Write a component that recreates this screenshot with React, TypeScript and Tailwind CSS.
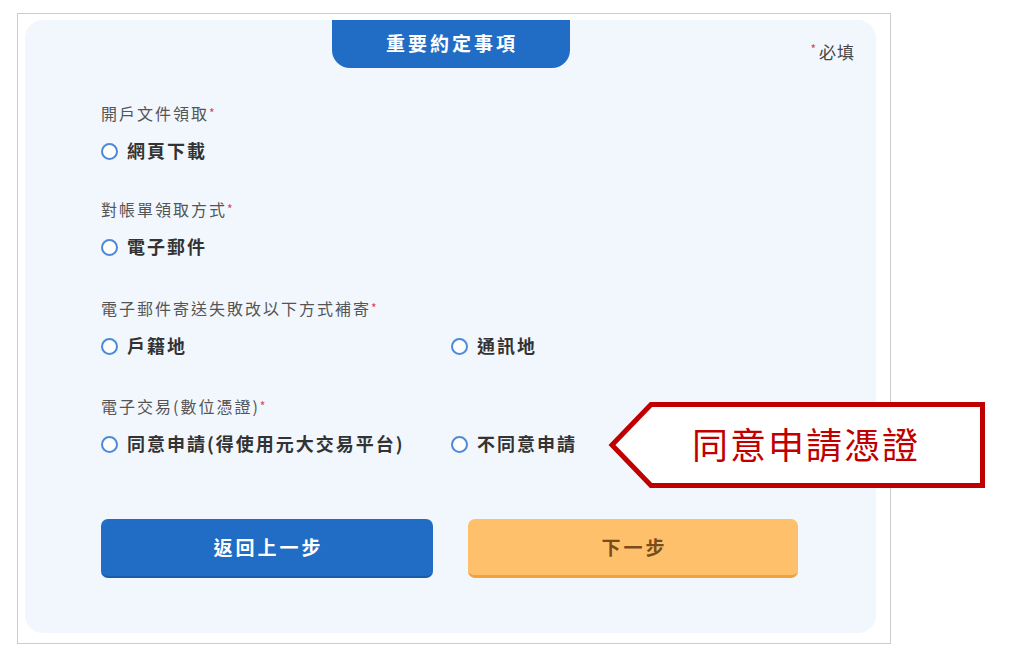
import React from 'react';

type Section = {
  label: string;
  options: string[];
  gap: string;
};

const sections: Section[] = [
  { label: '開戶文件領取', options: ['網頁下載'], gap: 'mt-0' },
  { label: '對帳單領取方式', options: ['電子郵件'], gap: 'mt-[38px]' },
  { label: '電子郵件寄送失敗改以下方式補寄', options: ['戶籍地', '通訊地'], gap: 'mt-[41px]' },
  { label: '電子交易(數位憑證)', options: ['同意申請(得使用元大交易平台)', '不同意申請'], gap: 'mt-[40px]' },
];

function Radio({ text }: { text: string }) {
  return (
    <label className="w-[350px] h-[20px] flex items-center gap-[9px] cursor-pointer">
      <span className="w-[17px] h-[17px] rounded-full border-2 border-[#4d8ad6] bg-white shrink-0" />
      <span className="text-[18px] leading-[20px] font-bold tracking-[2px] text-[#333333] whitespace-nowrap -mt-[3px]">
        {text}
      </span>
    </label>
  );
}

export default function App() {
  return (
    <div className="relative w-[1024px] h-[662px] bg-white overflow-hidden pt-[13px] pl-[17px] font-['Noto_Sans_CJK_TC','Noto_Sans',sans-serif]">
      {/* 外框 */}
      <div className="w-[874px] h-[631px] border border-[#cccccc] pt-[6px] pl-[7px] pr-[14px] pb-[10px]">
        <div className="h-full rounded-[18px] bg-[#f2f7fe] flex flex-col">
          {/* 標題 */}
          <div className="relative flex justify-center h-[48px]">
            <div className="w-[238px] h-[48px] rounded-b-[18px] bg-[#216dc6] flex items-center justify-center">
              <span className="text-white text-[19px] font-bold tracking-[3px] pl-[3px] -mt-[2px]">重要約定事項</span>
            </div>
            <div className="absolute right-[21px] top-[21px] h-[22px] flex items-center text-[17px] text-[#444444] tracking-[1px]">
              <span className="text-[#e0405a] text-[12px] mr-[2px] -mt-[6px]">*</span>
              必填
            </div>
          </div>

          {/* 表單內容 */}
          <div className="pl-[76px] pt-[35px] flex flex-col">
            {sections.map((s) => (
              <div key={s.label} className={s.gap}>
                <div className="h-[20px] leading-[20px] text-[16px] tracking-[2px] text-[#555555] whitespace-nowrap">
                  {s.label}
                  <span className="text-[#e0405a] text-[12px] align-top">*</span>
                </div>
                <div className="mt-[18px] flex">
                  {s.options.map((o) => (
                    <Radio key={o} text={o} />
                  ))}
                </div>
              </div>
            ))}

            {/* 按鈕 */}
            <div className="mt-[65px] flex gap-[35px]">
              <button className="w-[332px] h-[59px] rounded-[7px] bg-[#216dc6] border-b-2 border-[#1b5ca8] text-white text-[19px] font-bold tracking-[3px] pl-[3px]">
                返回上一步
              </button>
              <button className="w-[330px] h-[59px] rounded-[7px] bg-[#ffc06c] border-b-[3px] border-[#f0a23e] text-[#7a4c1c] text-[19px] font-bold tracking-[3px] pl-[3px]">
                下一步
              </button>
            </div>
          </div>
        </div>
      </div>

      {/* 說明標註 */}
      <div className="absolute left-[608px] top-[402px] w-[377px] h-[86px]">
        <svg width="377" height="86" viewBox="0 0 377 86" className="absolute inset-0">
          <polygon
            points="4,43 43,2.5 374.5,2.5 374.5,83.5 43,83.5"
            fill="#ffffff"
            stroke="#c00000"
            strokeWidth="5"
          />
        </svg>
        <div className="absolute left-[84px] top-0 h-[86px] flex items-center text-[36px] tracking-[2px] text-[#c00000] whitespace-nowrap -mt-[2px]">
          同意申請憑證
        </div>
      </div>
    </div>
  );
}
